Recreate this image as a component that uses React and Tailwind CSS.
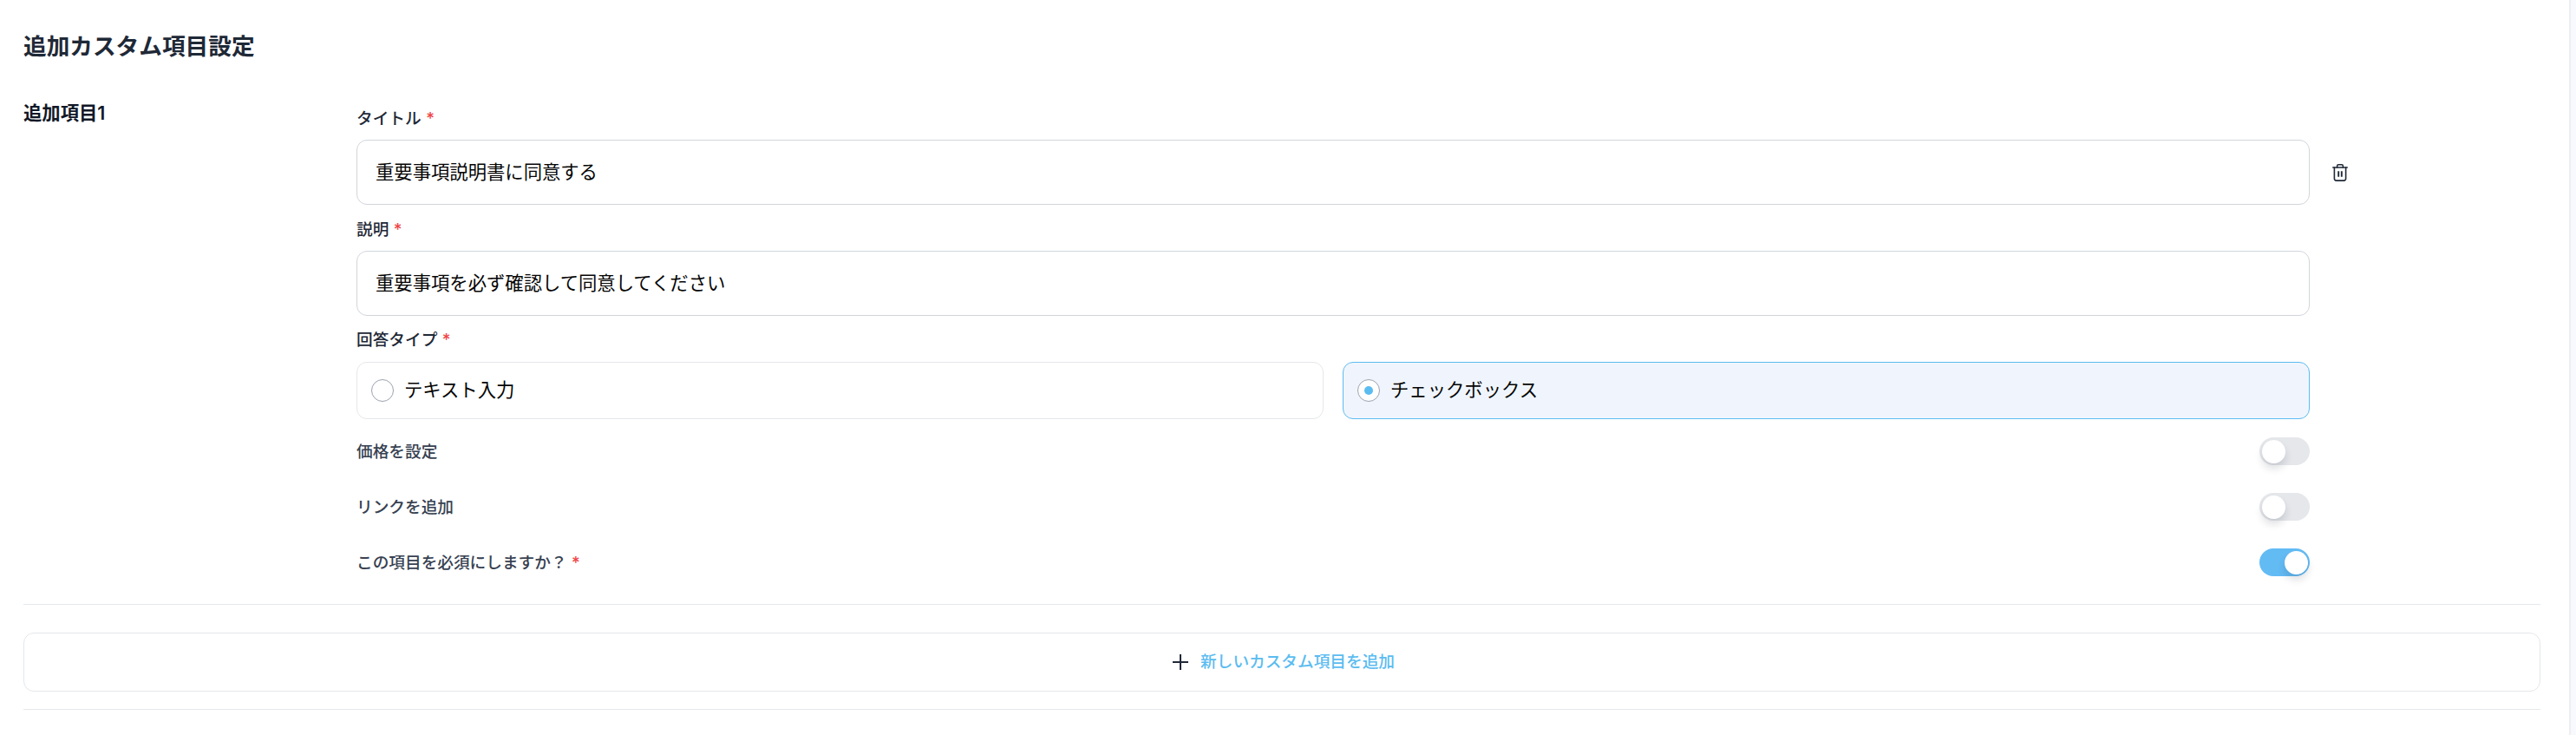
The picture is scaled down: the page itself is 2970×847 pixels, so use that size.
import React from "react";

const FONT = "font-['Inter','Noto_Sans_CJK_JP',sans-serif]";

function Req() {
  return <span className="ml-[5.5px] text-[#ef4444]">*</span>;
}

function FieldLabel({ children }) {
  return (
    <div className="flex h-[25px] items-center text-[18.67px] font-medium leading-[25px] text-[#1f2937]">
      {children}
    </div>
  );
}

function TextField({ value }) {
  return (
    <div className="flex h-[75px] items-center rounded-[12px] border border-[#d1d5db] bg-white px-[21px] text-[21.33px] text-[#050505]">
      {value}
    </div>
  );
}

function RadioCard({ label, checked }) {
  return (
    <div
      className={`flex h-[66px] flex-1 items-center gap-[12px] rounded-[12px] border pl-[16px] pr-[16px] text-[21.33px] text-[#050505] ${
        checked ? "border-[#5bbcf0] bg-[#f0f5fd]" : "border-[#e5e7eb] bg-white"
      }`}
    >
      <span className="flex h-[26px] w-[26px] items-center justify-center rounded-full border border-[#9ca3af] bg-white">
        {checked && <span className="h-[10px] w-[10px] rounded-full bg-[#5bbcf0]" />}
      </span>
      {label}
    </div>
  );
}

function Toggle({ on }) {
  return (
    <div
      className={`flex h-[32px] w-[58px] items-center rounded-full px-[2.5px] ${
        on ? "justify-end bg-[#63bbf4]" : "justify-start bg-[#e5e7eb]"
      }`}
    >
      <span className="h-[27px] w-[27px] rounded-full bg-white shadow-[0_6px_10px_rgba(17,24,39,0.14)]" />
    </div>
  );
}

function ToggleRow({ label, on, required }) {
  return (
    <div className="flex h-[32px] items-center justify-between">
      <span className="pt-[2px] text-[18.67px] font-medium text-[#374151]">
        {label}
        {required && <Req />}
      </span>
      <Toggle on={on} />
    </div>
  );
}

function TrashIcon() {
  return (
    <svg width="18" height="20" viewBox="0 0 18 20" fill="none" stroke="#1f2937" strokeWidth="1.6" strokeLinecap="round" strokeLinejoin="round">
      <path d="M0.8 4h16.4" />
      <path d="M5.6 4V2.4C5.6 1.5 6.3 0.8 7.2 0.8h3.6c0.9 0 1.6 0.7 1.6 1.6V4" />
      <path d="M2.4 4v12.8c0 1.3 1 2.3 2.3 2.3h8.6c1.3 0 2.3-1 2.3-2.3V4" />
      <path d="M7.2 8.2v6.6M10.8 8.2v6.6" strokeWidth="1.9" strokeLinecap="butt" />
    </svg>
  );
}

export default function App() {
  return (
    <div className={`flex h-[847px] overflow-hidden bg-[#f8f9fc] ${FONT}`}>
      <div className="h-[860px] w-[2964px] rounded-br-[16px] border-r-2 border-b-2 border-[#eceef5] bg-white pl-[27px] pr-[33px]">
        <h2 className="pt-[36px] text-[26.67px] font-semibold leading-[34px] text-[#1f2937]">
          追加カスタム項目設定
        </h2>

        <div className="mt-[45px] flex border-b border-[#e5e7eb] pb-[32px]">
          <div className="w-[384px] text-[21.33px] font-semibold leading-[30px] text-[#111827]">追加項目1</div>
          <div className="flex-1">
            <div className="w-[2252px] pt-[9px]">
              <FieldLabel>
                タイトル
                <Req />
              </FieldLabel>
              <div className="relative mt-[12px]">
                <TextField value="重要事項説明書に同意する" />
                <div className="absolute left-[2278px] top-[28px]">
                  <TrashIcon />
                </div>
              </div>
              <div className="mt-[16px]">
                <FieldLabel>
                  説明
                  <Req />
                </FieldLabel>
              </div>
              <div className="mt-[12px]">
                <TextField value="重要事項を必ず確認して同意してください" />
              </div>
              <div className="mt-[15px]">
                <FieldLabel>
                  回答タイプ
                  <Req />
                </FieldLabel>
              </div>
              <div className="mt-[13px] flex gap-[22px]">
                <RadioCard label="テキスト入力" />
                <RadioCard label="チェックボックス" checked />
              </div>
              <div className="mt-[21px] flex flex-col gap-[32px]">
                <ToggleRow label="価格を設定" />
                <ToggleRow label="リンクを追加" />
                <ToggleRow label="この項目を必須にしますか？" on required />
              </div>
            </div>
          </div>
        </div>

        <div className="mt-[32px] flex h-[68px] items-center justify-center gap-[14px] rounded-[12px] border border-[#e5e7eb] bg-white pl-[4px]">
          <svg width="18" height="18" viewBox="0 0 18 18" fill="none" stroke="#1f2937" strokeWidth="2">
            <path d="M9 0v18M0 9h18" />
          </svg>
          <span className="text-[18.67px] font-medium text-[#5bbcf0]">新しいカスタム項目を追加</span>
        </div>

        <div className="mt-[20px] border-b border-[#e5e7eb]" />
      </div>
    </div>
  );
}
